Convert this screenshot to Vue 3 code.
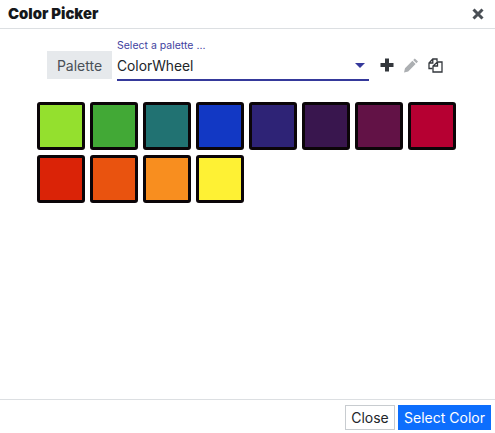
<template>
  <div class="dialog">
    <header class="dialog-header">
      <h2>Color Picker</h2>
      <button type="button" class="btn-close" aria-label="Close">
        <svg width="12" height="12" viewBox="0 0 12 12">
          <path d="M1.5 1.5 L10.5 10.5 M10.5 1.5 L1.5 10.5" stroke="#4a4f55" stroke-width="3" fill="none" />
        </svg>
      </button>
    </header>

    <main class="dialog-body">
      <div class="palette-row">
        <span class="addon">Palette</span>
        <div class="select-box">
          <label class="select-label">Select a palette ...</label>
          <div class="select-value">
            <span class="value-text">ColorWheel</span>
            <span class="caret"></span>
          </div>
        </div>
        <div class="tools">
          <svg width="14" height="14" viewBox="0 0 14 14">
            <path d="M5 0.5 H9 V5 H13.5 V9 H9 V13.5 H5 V9 H0.5 V5 H5 Z" fill="#33373c" />
          </svg>
          <svg width="14" height="15" viewBox="0 0 14 15">
            <path d="M10.8 0.4 L14 3.6 L12.4 5.2 L9.2 2 Z M8.4 2.8 L11.6 6 L4.2 13.4 L0 14.6 L1 10.2 Z" fill="#acafb2" />
          </svg>
          <svg width="15" height="15" viewBox="0 0 15 15">
            <path d="M4.5 10.5 H1 V5 L4.8 1 H9 V3.5 M4.8 1 V5 H1" fill="none" stroke="#33373c" stroke-width="1.3" />
            <path d="M9.5 4 H14 V14 H5 V8 Z M9.5 4 V8 H5" fill="#fff" stroke="#33373c" stroke-width="1.3" />
          </svg>
        </div>
      </div>

      <div class="swatches">
        <div
          v-for="color in colors"
          :key="color"
          class="swatch"
          :style="{ backgroundColor: color }"
        ></div>
      </div>
    </main>

    <footer class="dialog-footer">
      <button type="button" class="btn btn-light">Close</button>
      <button type="button" class="btn btn-primary">Select Color</button>
    </footer>
  </div>
</template>

<script setup>
const colors = [
  '#94e02e',
  '#42a936',
  '#217272',
  '#1238c4',
  '#2e2376',
  '#39164e',
  '#621246',
  '#b60032',
  '#da2307',
  '#e9530f',
  '#f88e1f',
  '#fef134'
];
</script>

<style>
html, body {
  margin: 0;
  background: #fff;
}
</style>

<style scoped>
.dialog {
  width: 495px;
  height: 433px;
  display: flex;
  flex-direction: column;
  font-family: Inter, "Liberation Sans", sans-serif;
  color: #212529;
  box-sizing: border-box;
}

.dialog-header {
  height: 28px;
  display: flex;
  align-items: center;
  justify-content: space-between;
  padding: 0 11px 0 8px;
  border-bottom: 1px solid #dcdfe2;
}

.dialog-header h2 {
  margin: 0;
  font-size: 14.8px;
  font-weight: 900;
  color: #16181b;
}

.btn-close {
  display: flex;
  padding: 0;
  border: none;
  background: none;
}

.dialog-body {
  flex: 1;
  padding: 10px 37px 0;
}

.palette-row {
  display: flex;
  align-items: flex-end;
  margin-left: 10px;
}

.addon {
  width: 65px;
  height: 28px;
  margin-bottom: 2px;
  display: flex;
  align-items: center;
  justify-content: center;
  background: #e6e9ec;
  color: #495057;
  font-size: 14px;
}

.select-box {
  width: 252px;
  margin-left: 5px;
}

.select-label {
  display: block;
  font-size: 10.5px;
  line-height: 13px;
  color: #3f42a0;
}

.select-value {
  height: 27px;
  display: flex;
  align-items: center;
  justify-content: space-between;
  padding-right: 4px;
  font-size: 13.8px;
  color: #212529;
  border-bottom: 2px solid #35399b;
}

.value-text {
  margin-top: 1px;
}

.caret {
  width: 0;
  height: 0;
  border-left: 5px solid transparent;
  border-right: 5px solid transparent;
  border-top: 5px solid #35399b;
}

.tools {
  display: flex;
  align-items: center;
  height: 28px;
  margin-left: 11px;
  margin-bottom: 2px;
  gap: 10px;
}

.swatches {
  display: grid;
  grid-template-columns: repeat(8, 48px);
  gap: 5px;
  margin-top: 21px;
}

.swatch {
  height: 48px;
  box-sizing: border-box;
  border: 3px solid #0b0508;
  border-radius: 3px;
}

.dialog-footer {
  height: 34px;
  box-sizing: border-box;
  display: flex;
  justify-content: flex-end;
  align-items: flex-start;
  gap: 3px;
  padding: 5px 4px 0 0;
  border-top: 1px solid #dcdfe2;
}

.btn {
  height: 25px;
  padding: 0;
  font-family: inherit;
  font-size: 14px;
  box-sizing: border-box;
}

.btn-light {
  width: 50px;
  background: #fff;
  color: #212529;
  border: 1px solid #c8ccd0;
}

.btn-primary {
  width: 93px;
  background: #0d6efd;
  color: #fff;
  border: 1px solid #0d6efd;
}
</style>
